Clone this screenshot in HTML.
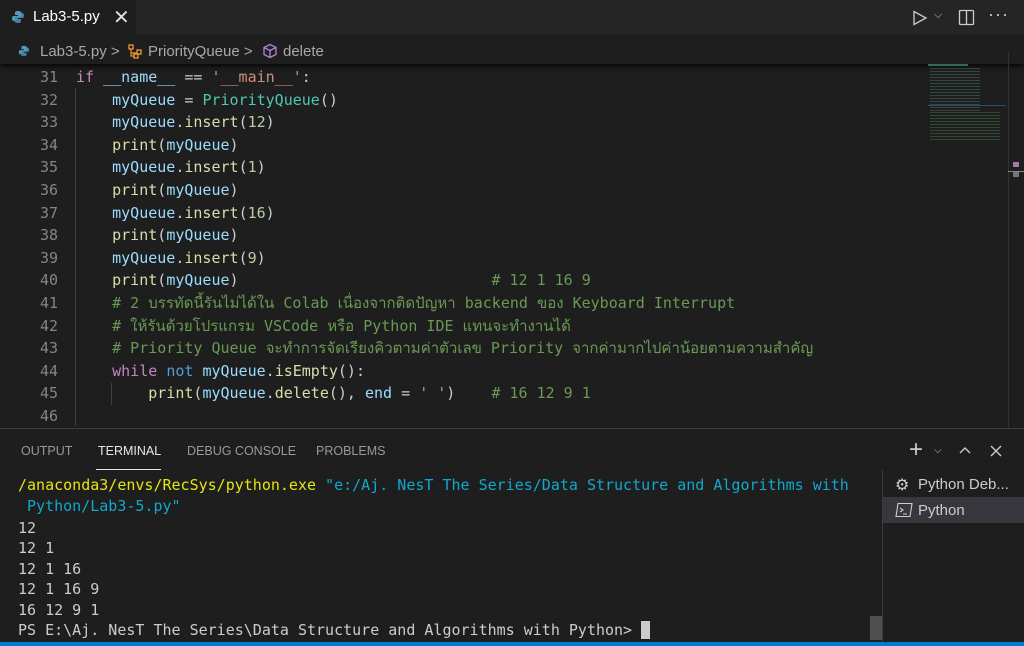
<!DOCTYPE html>
<html><head><meta charset="utf-8"><style>
*{margin:0;padding:0;box-sizing:border-box}
body{width:1024px;height:646px;background:#1e1e1e;overflow:hidden;position:relative;font-family:"Liberation Sans","DejaVu Sans",sans-serif;color:#ccc}
.abs{position:absolute}
.mono{font-family:"DejaVu Sans Mono","Liberation Mono",monospace;font-size:15px;white-space:pre;line-height:20px}
.mono div{height:20px;line-height:20px;overflow:visible}
.ln{position:absolute;left:0;width:58px;text-align:right;color:#858585}
.cl{position:absolute;left:76px}
.k{color:#c586c0}.v{color:#9cdcfe}.s{color:#ce9178}.c{color:#6a9955}.f{color:#dcdcaa}.t{color:#4ec9b0}.b{color:#569cd6}.n{color:#b5cea8}
.tl{position:absolute;left:18px;color:#ccc}
</style></head><body>
<div class="abs" style="left:0;top:0;width:1024px;height:35px;background:#252526"></div>
<div class="abs" style="left:0;top:0;width:136px;height:36px;background:#1e1e1e"></div>
<svg class="abs" style="left:11px;top:10px" width="14" height="14" viewBox="0 0 14 14"><path d="M7 1C4 1 4 2 4 3v2h3v1H2.5C1 6 1 8 1 8.5 1 11 2.5 11 3 11h1V9c0-1 1-2 2-2h3c1 0 1.5-.5 1.5-1.5V3C10.5 1.5 9 1 7 1z" fill="#519aba"/><path d="M7 13c3 0 3-1 3-2V9H7V8h4.5C13 8 13 6 13 5.5 13 3 11.5 3 11 3h-1v2c0 1-1 2-2 2H5c-1 0-1.5.5-1.5 1.5V11c0 1.5 1.5 2 3.5 2z" fill="#519aba" opacity=".8"/></svg>
<div class="abs" style="left:33px;top:8px;font-size:15px;color:#fff">Lab3-5.py</div>
<div class="abs" style="left:113px;top:5px;font-size:20px;color:#ddd">✕</div>
<svg class="abs" style="left:912px;top:10px" width="16" height="16"><path d="M2 1.5L14 8 2 14.5z" fill="none" stroke="#ccc" stroke-width="1.3"/></svg>
<div class="abs" style="left:934px;top:9px;font-size:11px;color:#ccc">⌵</div>
<svg class="abs" style="left:958px;top:9px" width="17" height="17"><rect x="1.5" y="1.5" width="14" height="14" rx="1" fill="none" stroke="#ccc" stroke-width="1.3"/><line x1="8.5" y1="1.5" x2="8.5" y2="15.5" stroke="#ccc" stroke-width="1.3"/></svg>
<div class="abs" style="left:988px;top:4px;font-size:18px;color:#ccc;letter-spacing:1px">···</div>
<div class="abs" style="left:0;top:36px;width:1024px;height:28px;background:#1e1e1e;box-shadow:0 3px 4px #000a"></div>
<svg class="abs" style="left:18px;top:45px" width="12" height="12" viewBox="0 0 14 14"><path d="M7 1C4 1 4 2 4 3v2h3v1H2.5C1 6 1 8 1 8.5 1 11 2.5 11 3 11h1V9c0-1 1-2 2-2h3c1 0 1.5-.5 1.5-1.5V3C10.5 1.5 9 1 7 1z" fill="#519aba"/><path d="M7 13c3 0 3-1 3-2V9H7V8h4.5C13 8 13 6 13 5.5 13 3 11.5 3 11 3h-1v2c0 1-1 2-2 2H5c-1 0-1.5.5-1.5 1.5V11c0 1.5 1.5 2 3.5 2z" fill="#519aba" opacity=".8"/></svg>
<div class="abs" style="left:40px;top:43px;font-size:15px;color:#a9a9a9">Lab3-5.py <span style="color:#aaa">&gt;</span></div>
<svg class="abs" style="left:127px;top:43px" width="16" height="16"><rect x="2" y="2" width="4" height="4" fill="none" stroke="#ee9d28" stroke-width="1.3"/><rect x="10" y="7" width="4" height="4" fill="none" stroke="#ee9d28" stroke-width="1.3"/><rect x="7" y="11" width="4" height="4" fill="none" stroke="#ee9d28" stroke-width="1.3"/><path d="M4 6v4h6M4 10v3h3" fill="none" stroke="#ee9d28" stroke-width="1.2"/></svg>
<div class="abs" style="left:148px;top:43px;font-size:15px;color:#a9a9a9">PriorityQueue <span>&gt;</span></div>
<svg class="abs" style="left:262px;top:43px" width="16" height="16"><path d="M8 1.5l6 3v7l-6 3-6-3v-7z M2 4.5l6 3 6-3 M8 7.5v7" fill="none" stroke="#b180d7" stroke-width="1.3"/></svg>
<div class="abs" style="left:283px;top:43px;font-size:15px;color:#a9a9a9">delete</div>
<div class="abs mono" style="left:0;top:67px;width:920px;height:360px">
<div class="abs" style="left:75px;top:21px;width:1px;height:338px;background:#404040"></div>
<div class="abs" style="left:111px;top:316px;width:1px;height:22px;background:#404040"></div>
<div class="ln" style="top:0px">31</div><div class="cl" style="top:0px"><span class="k">if</span> <span class="v">__name__</span> == <span class="s">'__main__'</span>:</div>
<div class="ln" style="top:22.6px">32</div><div class="cl" style="top:22.6px">    <span class="v">myQueue</span> = <span class="t">PriorityQueue</span>()</div>
<div class="ln" style="top:45.2px">33</div><div class="cl" style="top:45.2px">    <span class="v">myQueue</span>.<span class="f">insert</span>(<span class="n">12</span>)</div>
<div class="ln" style="top:67.8px">34</div><div class="cl" style="top:67.8px">    <span class="f">print</span>(<span class="v">myQueue</span>)</div>
<div class="ln" style="top:90.4px">35</div><div class="cl" style="top:90.4px">    <span class="v">myQueue</span>.<span class="f">insert</span>(<span class="n">1</span>)</div>
<div class="ln" style="top:113px">36</div><div class="cl" style="top:113px">    <span class="f">print</span>(<span class="v">myQueue</span>)</div>
<div class="ln" style="top:135.6px">37</div><div class="cl" style="top:135.6px">    <span class="v">myQueue</span>.<span class="f">insert</span>(<span class="n">16</span>)</div>
<div class="ln" style="top:158.2px">38</div><div class="cl" style="top:158.2px">    <span class="f">print</span>(<span class="v">myQueue</span>)</div>
<div class="ln" style="top:180.8px">39</div><div class="cl" style="top:180.8px">    <span class="v">myQueue</span>.<span class="f">insert</span>(<span class="n">9</span>)</div>
<div class="ln" style="top:203.4px">40</div><div class="cl" style="top:203.4px">    <span class="f">print</span>(<span class="v">myQueue</span>)                            <span class="c"># 12 1 16 9</span></div>
<div class="ln" style="top:226px">41</div><div class="cl c" style="top:226px">    # 2 บรรทัดนี้รันไม่ได้ใน Colab เนื่องจากติดปัญหา backend ของ Keyboard Interrupt</div>
<div class="ln" style="top:248.6px">42</div><div class="cl c" style="top:248.6px">    # ให้รันด้วยโปรแกรม VSCode หรือ Python IDE แทนจะทำงานได้</div>
<div class="ln" style="top:271.2px">43</div><div class="cl c" style="top:271.2px">    # Priority Queue จะทำการจัดเรียงคิวตามค่าตัวเลข Priority จากค่ามากไปค่าน้อยตามความสำคัญ</div>
<div class="ln" style="top:293.8px">44</div><div class="cl" style="top:293.8px">    <span class="k">while</span> <span class="b">not</span> <span class="v">myQueue</span>.<span class="f">isEmpty</span>():</div>
<div class="ln" style="top:316.4px">45</div><div class="cl" style="top:316.4px">        <span class="f">print</span>(<span class="v">myQueue</span>.<span class="f">delete</span>(), <span class="v">end</span> = <span class="s">' '</span>)    <span class="c"># 16 12 9 1</span></div>
<div class="ln" style="top:339px">46</div>
</div>
<div class="abs" style="left:928px;top:64px;width:40px;height:2px;background:#4ec9b0;opacity:.5"></div>
<div class="abs" style="left:930px;top:68px;width:50px;height:45px;background:repeating-linear-gradient(#3a5a4a 0 1px,#1e1e1e 1px 3px);opacity:.7"></div>
<div class="abs" style="left:928px;top:105px;width:78px;height:1px;background:#264f78"></div>
<div class="abs" style="left:930px;top:112px;width:70px;height:28px;background:repeating-linear-gradient(#3a5a3a 0 1px,#1e1e1e 1px 3px);opacity:.7"></div>
<div class="abs" style="left:1008px;top:52px;width:1px;height:376px;background:#333"></div>
<div class="abs" style="left:1013px;top:162px;width:6px;height:5px;background:#a07ca0"></div>
<div class="abs" style="left:1008px;top:171px;width:16px;height:1px;background:#888"></div>
<div class="abs" style="left:1013px;top:172px;width:6px;height:5px;background:#777"></div>
<div class="abs" style="left:0;top:428px;width:1024px;height:218px;background:#1e1e1e;border-top:1px solid #3c3c3c"></div>
<div class="abs" style="left:21px;top:444px;font-size:12.5px;color:#999">OUTPUT</div>
<div class="abs" style="left:98px;top:444px;font-size:12.5px;color:#e7e7e7">TERMINAL</div>
<div class="abs" style="left:96px;top:469px;width:65px;height:1px;background:#e7e7e7"></div>
<div class="abs" style="left:187px;top:444px;font-size:12.5px;color:#999">DEBUG CONSOLE</div>
<div class="abs" style="left:316px;top:444px;font-size:12.5px;color:#999">PROBLEMS</div>
<div class="abs" style="left:909px;top:436px;font-size:24px;color:#ccc;font-weight:300">+</div>
<div class="abs" style="left:934px;top:445px;font-size:10px;color:#ccc">⌵</div>
<svg class="abs" style="left:958px;top:444px" width="14" height="12"><path d="M2 9l5-5 5 5" fill="none" stroke="#ccc" stroke-width="1.4"/></svg>
<svg class="abs" style="left:990px;top:445px" width="12" height="12"><path d="M1 1l10 10M11 1L1 11" stroke="#ccc" stroke-width="1.4"/></svg>
<div class="abs mono" style="left:0;top:475px;width:880px;height:170px">
<div class="tl" style="top:0px"><span style="color:#e5e510">/anaconda3/envs/RecSys/python.exe</span> <span style="color:#11a8cd">"e:/Aj. NesT The Series/Data Structure and Algorithms with</span></div>
<div class="tl" style="top:20.6px"><span style="color:#11a8cd"> Python/Lab3-5.py"</span></div>
<div class="tl" style="top:42.5px">12</div>
<div class="tl" style="top:63px">12 1</div>
<div class="tl" style="top:83.5px">12 1 16</div>
<div class="tl" style="top:104px">12 1 16 9</div>
<div class="tl" style="top:124.5px">16 12 9 1</div>
<div class="tl" style="top:145px">PS E:\Aj. NesT The Series\Data Structure and Algorithms with Python&gt; <span style="background:#ccc"> </span></div>
</div>
<div class="abs" style="left:870px;top:616px;width:12px;height:24px;background:#4f4f4f"></div>
<div class="abs" style="left:882px;top:470px;width:1px;height:172px;background:#3c3c3c"></div>
<div class="abs" style="left:883px;top:497px;width:141px;height:26px;background:#37373d"></div>
<div class="abs" style="left:895px;top:475px;font-size:16px;color:#ccc">⚙</div>
<div class="abs" style="left:918px;top:476px;font-size:15px;color:#ccc">Python Deb...</div>
<svg class="abs" style="left:895px;top:502px" width="18" height="16"><path d="M3 1.5h14l-2 13H1z" fill="none" stroke="#ccc" stroke-width="1.1"/><path d="M5 6l3 2-3 2M8 12h4" fill="none" stroke="#ccc" stroke-width="1.1"/></svg>
<div class="abs" style="left:918px;top:502px;font-size:15px;color:#ccc">Python</div>
<div class="abs" style="left:0;top:642px;width:1024px;height:4px;background:#007acc"></div>
</body></html>
